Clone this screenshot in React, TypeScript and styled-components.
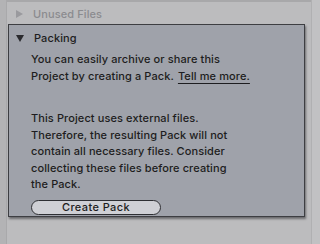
import React from 'react'
import styled, { createGlobalStyle } from 'styled-components'

const GlobalStyle = createGlobalStyle`
  html, body {
    margin: 0;
    padding: 0;
    background: #bcbcbe;
  }
  body {
    font-family: Inter, 'Noto Sans', sans-serif;
  }
`

const Screen = styled.div`
  width: 320px;
  height: 244px;
  display: flex;
  overflow: hidden;
  background: #bcbcbe;
`

const LeftStrip = styled.div`
  width: 6px;
  flex: none;
  background: #b3b3b5;
  border-right: 1px solid #a9a9ab;
`

const RightStrip = styled.div`
  width: 8px;
  flex: none;
  background: #c1c1c3;
  border-left: 1px solid #b0b0b2;
`

const Main = styled.div`
  flex: 1;
  display: flex;
  flex-direction: column;
  border-top: 2px solid #a8a8aa;
  padding-right: 4px;
`

const Row = styled.div<{ muted?: boolean }>`
  height: 22px;
  flex: none;
  box-sizing: border-box;
  padding-top: 2px;
  display: flex;
  align-items: center;
  gap: 10px;
  padding-left: 8px;
  font-size: 11px;
  font-weight: 500;
  letter-spacing: 0.1px;
  color: ${({ muted }) => (muted ? '#8b8b8f' : '#1d1d20')};
`

const Triangle = styled.span<{ open?: boolean; textColor: string }>`
  width: 0;
  height: 0;
  flex: none;
  ${({ open, textColor }) =>
    open
      ? `border-left: 4px solid transparent;
         border-right: 4px solid transparent;
         border-top: 7px solid ${textColor};`
      : `border-top: 4px solid transparent;
         border-bottom: 4px solid transparent;
         border-left: 7px solid ${textColor};
         margin-left: 1px;`}
`

const Panel = styled.div`
  margin-left: 1px;
  width: 297px;
  height: 193px;
  flex: none;
  box-sizing: border-box;
  background: #9fa2aa;
  border: 1px solid #3d3e42;
  box-shadow: 1px 2px 2px rgba(40, 40, 44, 0.55);
  display: flex;
  flex-direction: column;
`

const PanelHeader = styled(Row)`
  padding-left: 7px;
  padding-top: 0;
  height: 26px;
`

const Body = styled.div`
  padding-left: 22px;
  display: flex;
  flex-direction: column;
`

const Para = styled.p<{ gapAfter: number }>`
  margin: 0 0 ${({ gapAfter }) => gapAfter}px;
  font-size: 11px;
  font-weight: 500;
  line-height: 16.5px;
  letter-spacing: 0.1px;
  color: #1d1d20;
`

const Link = styled.span`
  text-decoration: underline;
  text-underline-offset: 3px;
  margin-left: 4px;
`

const Button = styled.button`
  width: 130px;
  height: 15px;
  padding: 0;
  box-sizing: border-box;
  border: 1px solid #2e2f33;
  border-radius: 8px;
  background: #cfd0d5;
  font-family: Inter, 'Noto Sans', sans-serif;
  font-size: 11px;
  font-weight: 500;
  letter-spacing: 0.4px;
  color: #1d1d20;
  line-height: 13px;
`

export default function App() {
  return (
    <>
      <GlobalStyle />
      <Screen>
        <LeftStrip />
        <Main>
          <Row muted>
            <Triangle textColor="#9a9a9e" />
            Unused Files
          </Row>
          <Panel>
            <PanelHeader>
              <Triangle open textColor="#2a2a2e" />
              Packing
            </PanelHeader>
            <Body>
              <Para gapAfter={26}>
                You can easily archive or share this
                <br />
                Project by creating a Pack.<Link>Tell me more.</Link>
              </Para>
              <Para gapAfter={7}>
                This Project uses external files.
                <br />
                Therefore, the resulting Pack will not
                <br />
                contain all necessary files. Consider
                <br />
                collecting these files before creating
                <br />
                the Pack.
              </Para>
              <Button>Create Pack</Button>
            </Body>
          </Panel>
        </Main>
        <RightStrip />
      </Screen>
    </>
  )
}
